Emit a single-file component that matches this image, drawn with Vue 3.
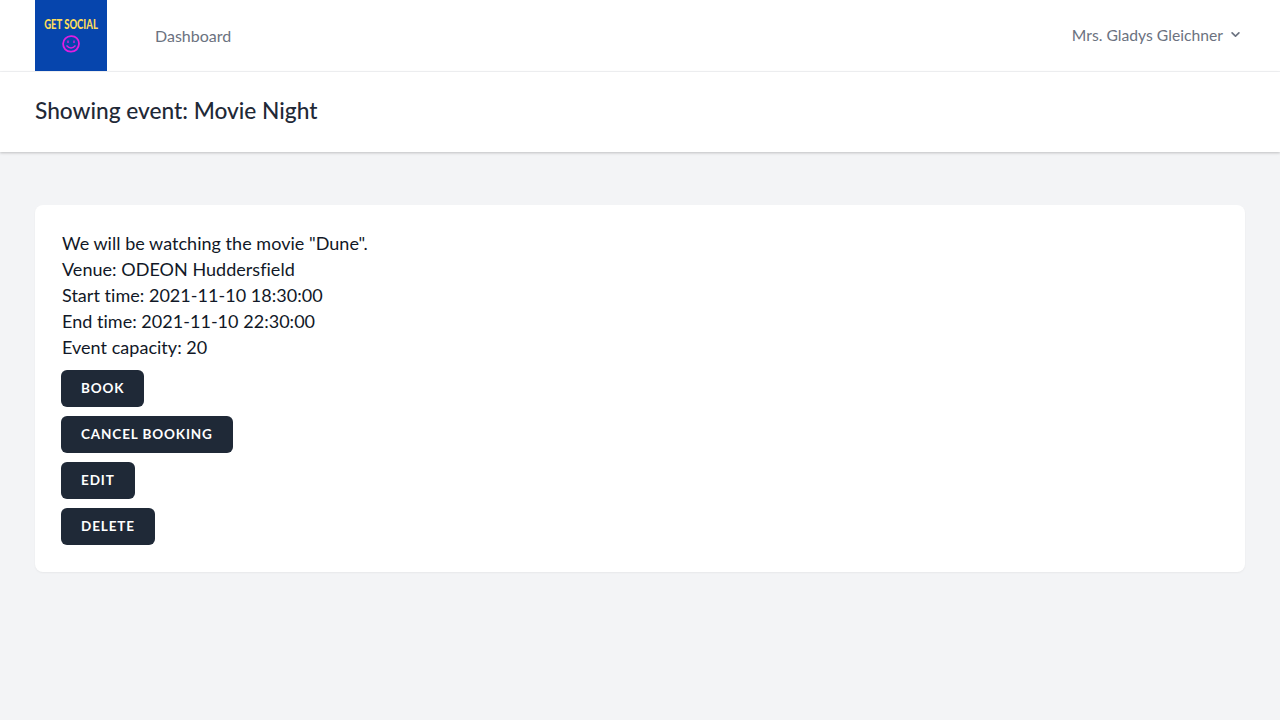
<script setup>
const lines = [
  'We will be watching the movie "Dune".',
  'Venue: ODEON Huddersfield',
  'Start time: 2021-11-10 18:30:00',
  'End time: 2021-11-10 22:30:00',
  'Event capacity: 20'
]
const buttons = ['BOOK', 'CANCEL BOOKING', 'EDIT', 'DELETE']
</script>

<template>
  <div class="page">
    <nav class="nav">
      <div class="nav-left">
        <div class="logo">
          <svg width="72" height="71" viewBox="0 0 72 71">
            <rect width="72" height="71" fill="#0645ad" />
            <text transform="translate(36 28.500) scale(.95 1.3)" text-anchor="middle" class="logo-text">GET SOCIAL</text>
            <path d="M36 36.200c4.600-.3 8 3 8 7.400 0 4.800-3.600 8.200-8.200 8.100-4.500-.1-7.800-3.400-7.700-7.900.1-4.400 3.500-7.400 7.900-7.600z" fill="none" stroke="#e01ee0" stroke-width="1.800" />
            <path d="M33 40.500v2.400M39 40.500v2.400" fill="none" stroke="#e01ee0" stroke-width="1.300" />
            <path d="M31.500 45.500 Q36 50.500 40.500 45.500" fill="none" stroke="#e01ee0" stroke-width="1.400" />
          </svg>
        </div>
        <a class="nav-link">Dashboard</a>
      </div>
      <div class="user">
        <span>Mrs. Gladys Gleichner</span>
        <svg width="17" height="17" viewBox="0 0 20 20" fill="#6b7280">
          <path d="M5.293 7.293a1 1 0 011.414 0L10 10.586l3.293-3.293a1 1 0 111.414 1.414l-4 4a1 1 0 01-1.414 0l-4-4a1 1 0 010-1.414z" />
        </svg>
      </div>
    </nav>
    <header class="header">
      <h2>Showing event: Movie Night</h2>
    </header>
    <main class="main">
      <section class="card">
        <p v-for="line in lines" :key="line">{{ line }}</p>
        <div class="actions">
          <button v-for="b in buttons" :key="b">{{ b }}</button>
        </div>
      </section>
    </main>
  </div>
</template>

<style>
html, body { margin: 0; background: #f3f4f6; }
</style>

<style scoped>
.page {
  min-height: 720px;
  background: #f3f4f6;
  font-family: "Lato", "Noto Sans", sans-serif;
  color: #111827;
}
.nav {
  height: 71px;
  background: #fff;
  border-bottom: 1px solid #f3f4f6;
  display: flex;
  justify-content: space-between;
  padding: 0 36px 0 35px;
}
.nav-left { display: flex; align-items: center; gap: 48px; }
.logo { width: 72px; height: 71px; }
.logo svg { display: block; }
.logo-text {
  font-family: "Lato", sans-serif;
  font-weight: 900;
  font-size: 10px;
  fill: #fbdc5c;
}
.nav-link { font-size: 16px; color: #6b7280; margin-bottom: 1px; }
.user {
  display: flex;
  align-items: center;
  gap: 4px;
  font-size: 15.7px;
  color: #6b7280;
  margin-bottom: 2px;
}
.header {
  height: 80px;
  background: #fff;
  box-shadow: 0 1px 3px rgba(0, 0, 0, .15), 0 1px 2px rgba(0, 0, 0, .08);
  padding: 0 35px;
  display: flex;
  align-items: center;
}
.header h2 { margin: 0 0 3px; font-size: 22.7px; font-weight: 500; color: #1f2937; }
.main { padding: 53px 35px 0; }
.card {
  background: #fff;
  border-radius: 8px;
  padding: 25px 26px 27px 27px;
  box-shadow: 0 1px 2px rgba(0, 0, 0, .05);
  height: 367px;
  box-sizing: border-box;
}
.card p { margin: 0; font-size: 18px; line-height: 26px; letter-spacing: .03px; }
.actions {
  display: flex;
  flex-direction: column;
  align-items: flex-start;
  gap: 9px;
  margin: 10px 0 0 -1px;
}
button {
  height: 37px;
  padding: 0 19px 2px;
  border: 1px solid transparent;
  border-radius: 6px;
  background: #1f2937;
  color: #fff;
  font-family: inherit;
  font-size: 13.5px;
  font-weight: 700;
  letter-spacing: .88px;
}
</style>
